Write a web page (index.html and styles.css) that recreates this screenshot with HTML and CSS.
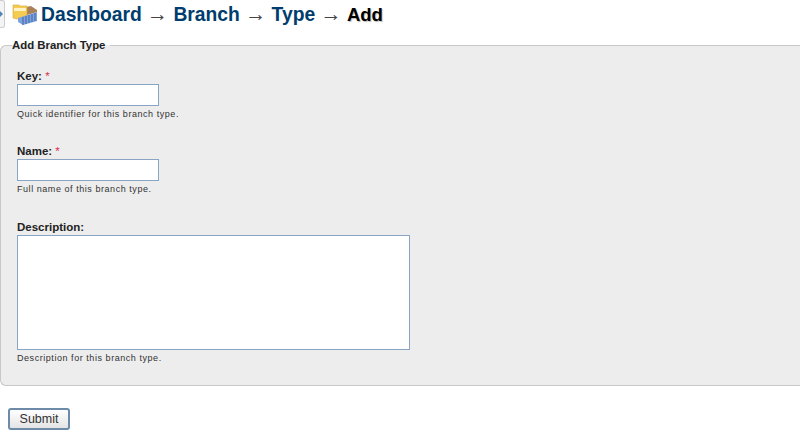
FILE: index.html
```html
<!DOCTYPE html>
<html lang="en">
<head>
    <meta charset="UTF-8">
    <title>Add Branch Type</title>
    <link rel="stylesheet" href="styles.css">
</head>
<body>
    <div class="page-head">
        <span class="side-tab"><span class="tab-arrow"></span></span>
        <svg class="head-icon" width="26" height="24" viewBox="0 0 26 24">
            <path d="M14 5l5-1 6 4v2l-10 3z" fill="#a9825a"/>
            <path d="M1 3h6l1 1h7v10l-10 3-4-1z" fill="#f4cc52" stroke="#d3a53a" stroke-width="0.6"/>
            <path d="M2 6h12v3H2z" fill="#fdf3c4"/>
            <path d="M6 16l19-6v9l-14 4-5-3z" fill="#7fa2dc"/>
            <path d="M11 15v8M14 14v8M17 13v8M20 12v8M23 11v8" stroke="#3f68a8" stroke-width="1"/>
        </svg>
        <h1>
            <a class="crumb" href="#">Dashboard</a> <span class="arrow">→</span>
            <a class="crumb" href="#">Branch</a> <span class="arrow">→</span>
            <a class="crumb" href="#">Type</a> <span class="arrow">→</span>
            <span class="current">Add</span>
        </h1>
    </div>

    <form>
        <fieldset class="form-box">
            <legend>Add Branch Type</legend>

            <div class="field key-field">
                <label>Key: <span class="req">*</span></label>
                <input type="text" class="text-input">
                <p class="help">Quick identifier for this branch type.</p>
            </div>

            <div class="field name-field">
                <label>Name: <span class="req">*</span></label>
                <input type="text" class="text-input">
                <p class="help">Full name of this branch type.</p>
            </div>

            <div class="field desc-field">
                <label>Description:</label>
                <textarea class="text-area"></textarea>
                <p class="help">Description for this branch type.</p>
            </div>
        </fieldset>

        <button type="button" class="submit-button">Submit</button>
    </form>
</body>
</html>
```

FILE: styles.css
```css
html, body {
    height: 430px;
    overflow: hidden;
}
body {
    margin: 0;
    font-family: "Liberation Sans", Arial, sans-serif;
    background-color: #fff;
    color: #222;
}
.page-head {
    display: flex;
    align-items: center;
    height: 28px;
}
.side-tab {
    display: flex;
    align-items: center;
    width: 5px;
    height: 28px;
    box-sizing: border-box;
    background-color: #f4f4f4;
    border: 1px solid #ccc;
    border-left: none;
    border-radius: 0 3px 3px 0;
    margin-right: 7px;
}
.tab-arrow {
    width: 0;
    height: 0;
    border-left: 3px solid #4f86b8;
    border-top: 3px solid transparent;
    border-bottom: 3px solid transparent;
}
.head-icon {
    margin-right: 3px;
}
h1 {
    margin: 0;
    font-size: 19.3px;
    font-weight: bold;
    white-space: nowrap;
    color: #444;
}
.crumb {
    color: #003d6e;
    text-decoration: none;
}
.arrow {
    font-size: 21px;
    font-weight: normal;
}
.current {
    font-size: 18.5px;
    color: #000;
    text-shadow: 1px 1px 1px #bbb;
}
.form-box {
    margin: 11px 0 0;
    padding: 0 16px;
    height: 347px;
    box-sizing: border-box;
    background-color: #ededed;
    border: 1px solid #c8c8c8;
    border-right: none;
    border-radius: 6px 0 0 6px;
}
legend {
    margin-left: -5px;
    padding: 0 5px 0 0;
    font-size: 11.4px;
    font-weight: bold;
    color: #222;
    line-height: 13px;
}
.field label {
    display: block;
    font-size: 11.5px;
    font-weight: bold;
    line-height: 15px;
    color: #222;
}
.req {
    color: #d9304f;
    font-weight: normal;
}
.text-input {
    display: block;
    width: 142px;
    height: 22px;
    margin: 0;
    padding: 0;
    box-sizing: border-box;
    background-color: #fff;
    border: 1px solid #8aa4c4;
}
.text-area {
    display: block;
    width: 393px;
    height: 115px;
    margin: 0;
    padding: 0;
    box-sizing: border-box;
    background-color: #fff;
    border: 1px solid #8aa4c4;
    resize: none;
}
.help {
    margin: 2px 0 0;
    font-size: 9px;
    line-height: 12px;
    letter-spacing: 0.55px;
    color: #333;
}
.key-field {
    margin-top: 17px;
}
.name-field {
    margin-top: 24px;
}
.desc-field {
    margin-top: 25px;
}
.submit-button {
    display: block;
    margin: 22px 0 0 8px;
    width: 62px;
    height: 22px;
    padding: 0;
    font-family: "Liberation Sans", Arial, sans-serif;
    font-size: 12.5px;
    color: #333;
    background: linear-gradient(#fff, #e4e4e4);
    border: 2px solid #6d8aa8;
    border-radius: 3px;
}
```
